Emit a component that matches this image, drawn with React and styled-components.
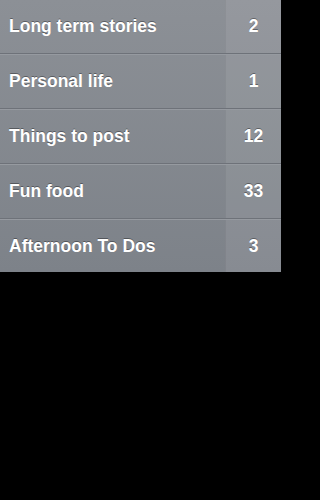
import React from 'react';
import styled, { createGlobalStyle } from 'styled-components';

const GlobalStyle = createGlobalStyle`
  html, body {
    margin: 0;
    padding: 0;
    background: #000;
  }
  body {
    font-family: "Liberation Sans", Arial, sans-serif;
  }
`;

const List = styled.ul`
  width: 100%;
  max-width: 281px;
  margin: 0;
  padding: 0;
  list-style: none;
  background: linear-gradient(to bottom, #8c9096 0%, #7d8289 100%);
`;

const Row = styled.li`
  display: flex;
  height: ${(p) => (p.$first ? 53 : p.$last ? 52 : 53)}px;
  border-top: ${(p) => (p.$first ? 'none' : '1px solid #969aa0')};
  border-bottom: ${(p) => (p.$last ? 'none' : '1px solid #6e7279')};
`;

const Title = styled.span`
  flex: 1;
  display: flex;
  align-items: center;
  padding-left: 9px;
  color: #fff;
  font-size: 17.5px;
  font-weight: bold;
  text-shadow: 0 -1px 0 rgba(0, 0, 0, 0.35);
`;

const Count = styled.span`
  width: 55px;
  display: flex;
  align-items: center;
  justify-content: center;
  background: rgba(255, 255, 255, 0.08);
  border-left: 1px solid rgba(0, 0, 0, 0.05);
  color: #fff;
  font-size: 17.5px;
  font-weight: bold;
  text-shadow: 0 -1px 0 rgba(0, 0, 0, 0.35);
`;

const lists = [
  { name: 'Long term stories', count: 2 },
  { name: 'Personal life', count: 1 },
  { name: 'Things to post', count: 12 },
  { name: 'Fun food', count: 33 },
  { name: 'Afternoon To Dos', count: 3 },
];

const App = () => {
  return (
    <>
      <GlobalStyle />
      <List>
        {lists.map((item, i) => (
          <Row key={item.name} $first={i === 0} $last={i === lists.length - 1}>
            <Title>{item.name}</Title>
            <Count>{item.count}</Count>
          </Row>
        ))}
      </List>
    </>
  );
};

export default App;
